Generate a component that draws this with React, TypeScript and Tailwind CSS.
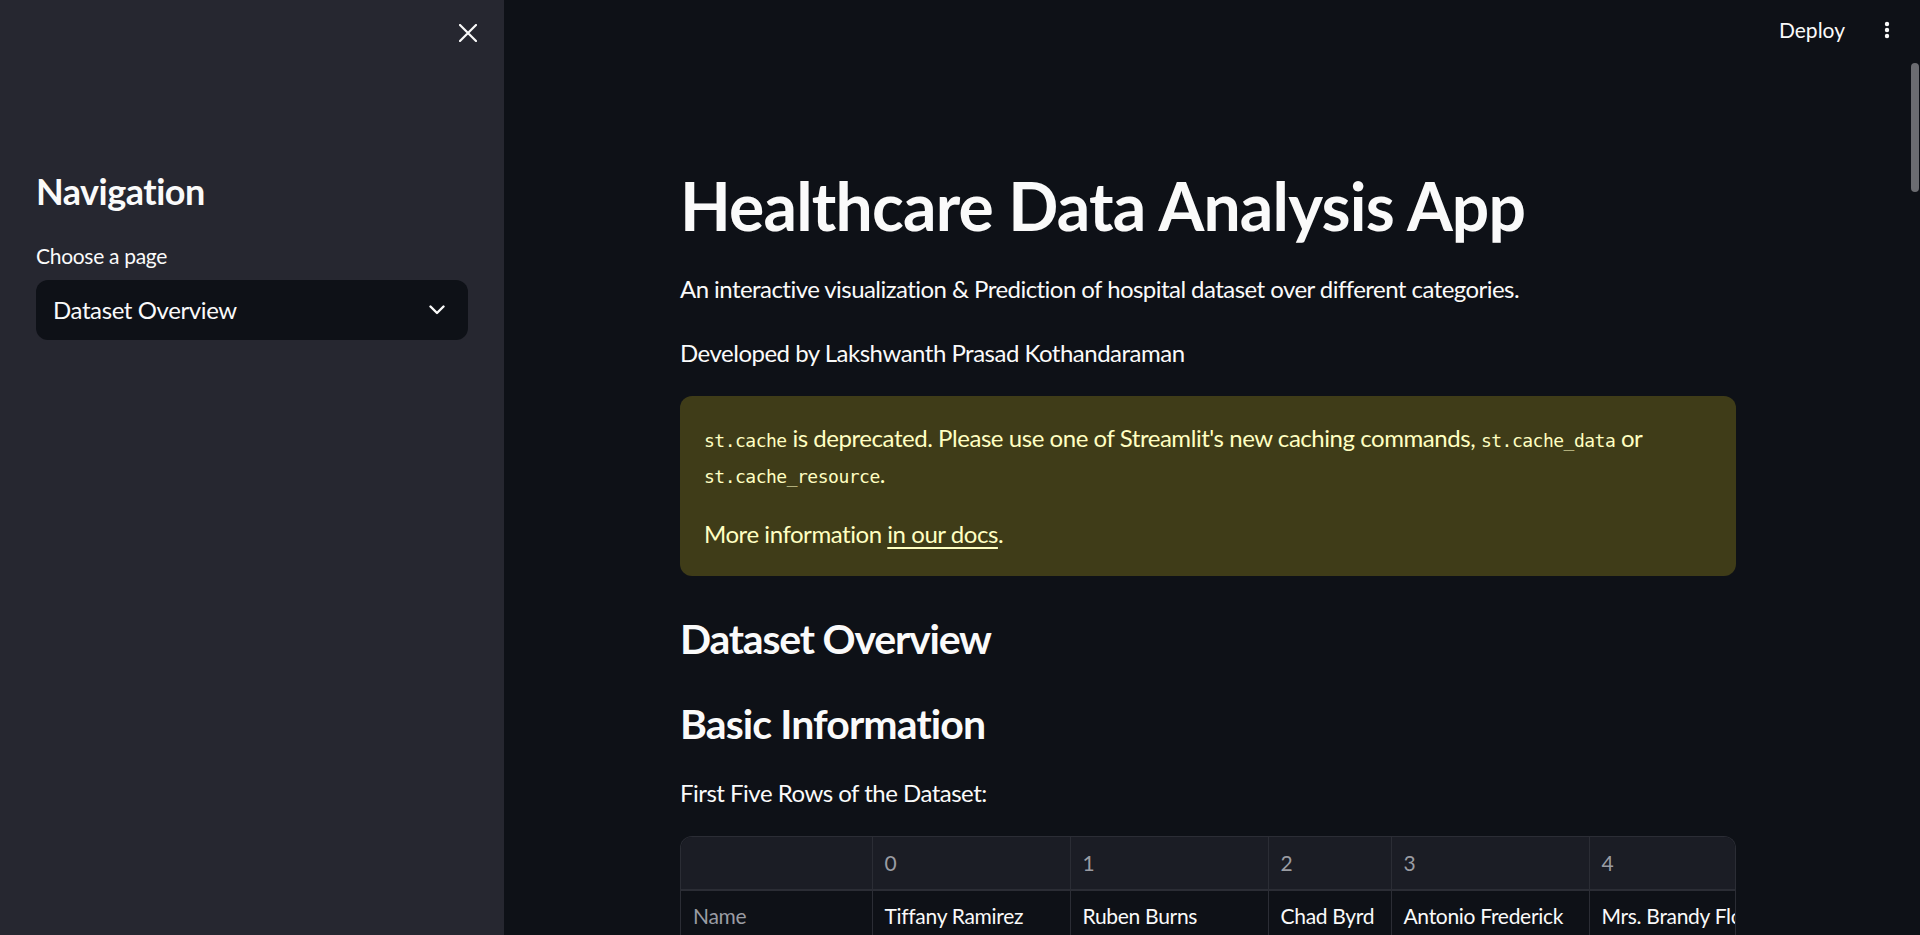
const cols = [
  { w: "w-[191px]", head: "", body: "Name" },
  { w: "w-[198px]", head: "0", body: "Tiffany Ramirez" },
  { w: "w-[198px]", head: "1", body: "Ruben Burns" },
  { w: "w-[123px]", head: "2", body: "Chad Byrd" },
  { w: "w-[198px]", head: "3", body: "Antonio Frederick" },
  { w: "w-[198px]", head: "4", body: "Mrs. Brandy Flores" },
];

function Code({ children }: { children: React.ReactNode }) {
  return (
    <code className="font-['DejaVu_Sans_Mono','Liberation_Mono',monospace] text-[18px] leading-[1] tracking-[-0.5px]">
      {children}
    </code>
  );
}

export default function App() {
  return (
    <div className="flex h-[935px] w-[1920px] overflow-hidden bg-[#0e1117] font-['Lato','Noto_Sans',sans-serif] text-[#fafafa]">
      {/* sidebar */}
      <aside className="w-[504px] shrink-0 bg-[#262730] px-[36px]">
        <div className="flex h-[66px] items-center justify-end">
          <svg width="18" height="18" viewBox="0 0 18 18" className="mr-[-9px]">
            <path d="M1 1L17 17M17 1L1 17" stroke="#fafafa" strokeWidth="2.2" strokeLinecap="round" />
          </svg>
        </div>
        <h1 className="mt-[104px] text-[36px] leading-[43px] font-bold tracking-[-0.5px]">Navigation</h1>
        <div className="mt-[26px] text-[21px] leading-[33px] tracking-[-0.3px]">Choose a page</div>
        <div className="mt-[8px] flex h-[60px] items-center justify-between rounded-[12px] bg-[#0e1117] pl-[17px] pr-[23px]">
          <span className="text-[24px] tracking-[-0.4px]">Dataset Overview</span>
          <svg width="16" height="10" viewBox="0 0 16 10">
            <path d="M1.5 1.5L8 8L14.5 1.5" stroke="#fafafa" strokeWidth="2.4" fill="none" strokeLinecap="round" strokeLinejoin="round" />
          </svg>
        </div>
      </aside>

      {/* main */}
      <main className="relative flex-1 pr-[8px]">
        <header className="flex h-[60px] items-center justify-end gap-[39px] pr-[22px]">
          <span className="text-[21px]">Deploy</span>
          <svg width="6" height="18" viewBox="0 0 6 18">
            <circle cx="3" cy="3" r="2.2" fill="#fafafa" />
            <circle cx="3" cy="9" r="2.2" fill="#fafafa" />
            <circle cx="3" cy="15" r="2.2" fill="#fafafa" />
          </svg>
        </header>
        <div className="absolute right-[1px] top-[63px] h-[129px] w-[8px] rounded-full bg-[#6b6c71]" />

        <div className="mx-auto w-[1104px] px-[24px] pt-[106px]">
          <h1 className="text-[66px] leading-[79px] font-bold tracking-[-0.8px]">Healthcare Data Analysis App</h1>
          <p className="mt-[25px] text-[24px] leading-[38px] tracking-[-0.55px]">
            An interactive visualization &amp; Prediction of hospital dataset over different categories.
          </p>
          <p className="mt-[26px] text-[24px] leading-[38px] tracking-[-0.5px]">Developed by Lakshwanth Prasad Kothandaraman</p>

          <div className="mt-[24px] rounded-[12px] bg-[#3f3c18] px-[24px] py-[24px] text-[24px] leading-[36px] tracking-[-0.45px] text-[#ffffc2]">
            <p>
              <Code>st.cache</Code> is deprecated. Please use one of Streamlit's new caching commands,{" "}
              <Code>st.cache_data</Code> or <Code>st.cache_resource</Code>.
            </p>
            <p className="mt-[24px]">
              More information <span className="underline underline-offset-[4px]">in our docs</span>.
            </p>
          </div>

          <h3 className="mt-[38px] text-[41px] leading-[50px] font-bold tracking-[-1.2px]">Dataset Overview</h3>
          <h3 className="mt-[35px] text-[41px] leading-[50px] font-bold tracking-[-0.9px]">Basic Information</h3>
          <p className="mt-[25px] text-[24px] leading-[38px] tracking-[-0.5px]">First Five Rows of the Dataset:</p>

          <div className="mt-[24px] overflow-hidden rounded-t-[12px] border-x border-t border-[#2b2d35]">
            <table className="w-[1106px] table-fixed border-collapse text-[21px] tracking-[-0.3px]">
              <colgroup>
                {cols.map((c, i) => (
                  <col key={i} className={c.w} />
                ))}
              </colgroup>
              <thead>
                <tr className="h-[53px] bg-[#1b1d25]">
                  {cols.map((c, i) => (
                    <th
                      key={i}
                      className="border-b-2 border-l border-[#2b2d35] px-[12px] text-left font-normal text-[#9a9ca3] first:border-l-0"
                    >
                      {c.head}
                    </th>
                  ))}
                </tr>
              </thead>
              <tbody>
                <tr className="h-[50px]">
                  {cols.map((c, i) => (
                    <td
                      key={i}
                      className={
                        i === 0
                          ? "px-[12px] whitespace-nowrap text-[#9a9ca3]"
                          : "border-l border-[#2b2d35] px-[12px] whitespace-nowrap"
                      }
                    >
                      {c.body}
                    </td>
                  ))}
                </tr>
              </tbody>
            </table>
          </div>
        </div>
      </main>
    </div>
  );
}
